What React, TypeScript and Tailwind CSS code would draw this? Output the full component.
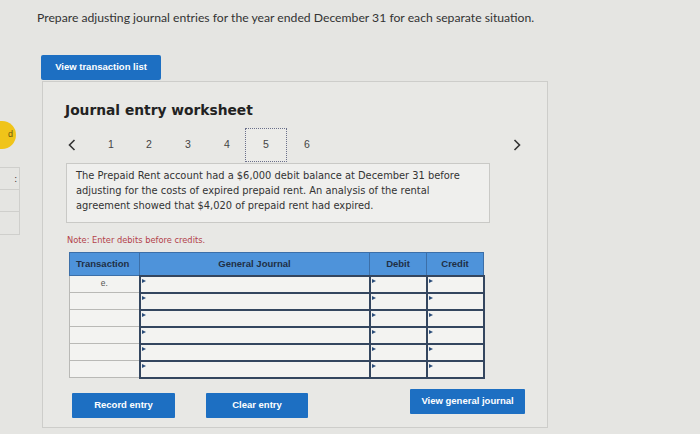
import React from 'react';

const rows = ['e.', '', '', '', '', ''];

function Chevron({ dir }: { dir: 'left' | 'right' }) {
  return (
    <svg width="8" height="12" viewBox="0 0 8 12" className="block">
      <polyline
        points={dir === 'left' ? '6.5,1 1.5,6 6.5,11' : '1.5,1 6.5,6 1.5,11'}
        fill="none"
        stroke="#333"
        strokeWidth="1.6"
      />
    </svg>
  );
}

function Marker() {
  return <span className="absolute left-[1px] top-[2px] w-0 h-0 border-y-[2.5px] border-y-transparent border-l-[4px] border-l-[#2b4d7a]" />;
}

function BlueButton({ label, className }: { label: string; className?: string }) {
  return (
    <button
      className={`h-[25px] bg-[#1d6fc2] text-white text-[9.5px] font-bold rounded-[1px] font-['Liberation_Sans',Arial,sans-serif] ${className ?? ''}`}
    >
      {label}
    </button>
  );
}

export default function App() {
  return (
    <div className="w-[700px] h-[434px] overflow-hidden bg-[#e5e5e2] flex text-[#2b2b2b]">
      {/* left strip, mostly cut off */}
      <div className="w-[20px] shrink-0 overflow-hidden pt-[121px]">
        <div className="w-[30px] h-[28px] -ml-[14px] rounded-full bg-[#f0c419] flex items-center justify-end pr-[3px] text-[9px] text-[#6b5a10] font-['Liberation_Sans',Arial,sans-serif]">
          d
        </div>
        <div className="mt-[18px] border border-[#cfcfcc] border-l-0">
          <div className="h-[22px] border-b border-[#cfcfcc] text-[9px] leading-[22px] text-right pr-[2px]">:</div>
          <div className="h-[22px] border-b border-[#cfcfcc]" />
          <div className="h-[22px]" />
        </div>
      </div>

      <div className="flex-1 pl-[17px]">
        <p className="mt-[10px] text-[12.2px] leading-[16px] text-[#333] font-['Lato','Open_Sans',sans-serif]">
          Prepare adjusting journal entries for the year ended December 31 for each separate situation.
        </p>

        <BlueButton label="View transaction list" className="mt-[29px] ml-[4px] w-[120px] rounded-[2px]" />

        {/* worksheet panel */}
        <div className="mt-[1px] ml-[5px] w-[506px] h-[347px] border border-[#cdcdca] bg-[#e8e8e5] pl-[22px]">
          <h2 className="mt-[19px] text-[13.8px] font-bold leading-[18px] text-[#222] font-['DejaVu_Sans',Verdana,sans-serif]">
            Journal entry worksheet
          </h2>

          <div className="mt-[9px] h-[34px] flex items-center pr-[26px] text-[10.5px] text-[#444] font-['Liberation_Sans',Arial,sans-serif]">
            <span className="ml-[3px] w-[30px]">
              <Chevron dir="left" />
            </span>
            <span className="w-[39px] pl-[10px]">1</span>
            <span className="w-[39px] pl-[9px]">2</span>
            <span className="w-[39px] pl-[9px]">3</span>
            <span className="w-[30px] pl-[9px]">4</span>
            <span className="w-[42px] h-[34px] border-[1.5px] border-dotted border-[#6a6f8a] bg-[#ebebe8] flex items-center justify-center">
              5
            </span>
            <span className="pl-[17px]">6</span>
            <span className="ml-auto">
              <Chevron dir="right" />
            </span>
          </div>

          <div className="mt-[1px] ml-[1px] w-[424px] h-[60px] border border-[#c9c9c6] bg-[#efefed] px-[9px] pt-[4px] text-[9.9px] leading-[15px] text-[#333] font-['DejaVu_Sans',Verdana,sans-serif]">
            The Prepaid Rent account had a $6,000 debit balance at December 31 before adjusting for the costs of expired prepaid rent. An analysis of the rental agreement showed that $4,020 of prepaid rent had expired.
          </div>

          <p className="mt-[12px] ml-[2px] text-[8.3px] leading-[10px] text-[#b3424a] font-['DejaVu_Sans',Verdana,sans-serif]">
            Note: Enter debits before credits.
          </p>

          <table className="mt-[7px] ml-[4px] border-collapse text-[9.5px] font-['Liberation_Sans',Arial,sans-serif]">
            <thead>
              <tr className="h-[23px] bg-[#4e93da] text-[#1f2f45] font-bold">
                <th className="w-[70px] border border-[#3c6fa8] text-left pl-[6px] font-bold">Transaction</th>
                <th className="w-[230px] border border-[#3c6fa8] font-bold">General Journal</th>
                <th className="w-[57px] border border-[#3c6fa8] font-bold">Debit</th>
                <th className="w-[57px] border border-[#3c6fa8] font-bold">Credit</th>
              </tr>
            </thead>
            <tbody>
              {rows.map((r, i) => (
                <tr key={i} className="h-[17px] bg-[#f3f3f1]">
                  <td className="border border-[#b9b9b6] text-center text-[8.5px] text-[#555] align-top leading-[14px]">{r}</td>
                  <td className="relative border-2 border-[#34465f]">
                    <Marker />
                  </td>
                  <td className="relative border-2 border-[#34465f]">
                    <Marker />
                  </td>
                  <td className="relative border-2 border-[#34465f]">
                    <Marker />
                  </td>
                </tr>
              ))}
            </tbody>
          </table>

          <div className="mt-[14px] flex items-start">
            <BlueButton label="Record entry" className="ml-[7px] w-[103px]" />
            <BlueButton label="Clear entry" className="ml-[31px] w-[102px]" />
            <BlueButton label="View general journal" className="ml-[102px] -mt-[4px] w-[115px]" />
          </div>
        </div>
      </div>
    </div>
  );
}
